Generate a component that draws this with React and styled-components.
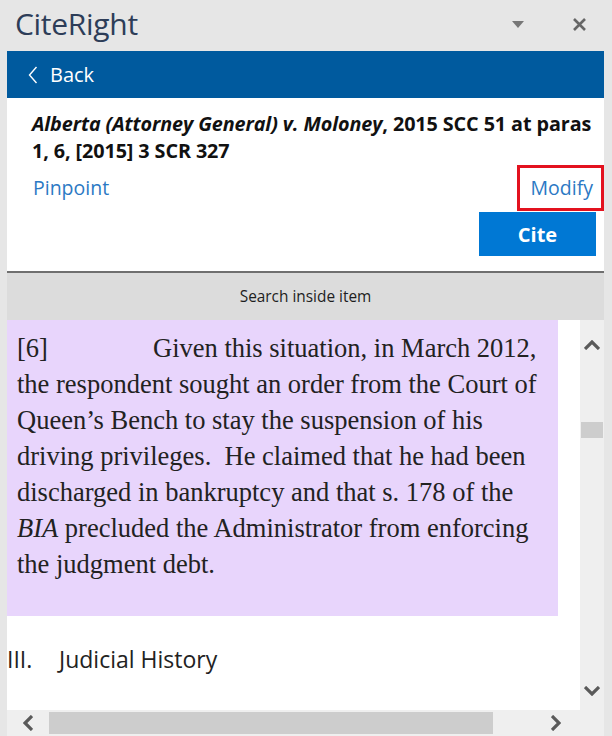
import React from "react";
import styled, { createGlobalStyle } from "styled-components";

const GlobalStyle = createGlobalStyle`
  html, body {
    margin: 0;
    padding: 0;
    background: #e6e6e6;
    overflow: hidden;
  }
  * {
    box-sizing: border-box;
  }
`;

function App() {
  return (
    <Frame>
      <GlobalStyle />
      <TitleBar>
        <AppName>CiteRight</AppName>
        <TitleActions>
          <svg width="12" height="7" viewBox="0 0 12 7">
            <path d="M0 0 L12 0 L6 7 Z" fill="#777" />
          </svg>
          <svg width="15" height="15" viewBox="0 0 15 15">
            <path d="M2 2 L13 13 M13 2 L2 13" stroke="#666" strokeWidth="2.6" />
          </svg>
        </TitleActions>
      </TitleBar>

      <BackBar>
        <svg width="10" height="18" viewBox="0 0 10 18">
          <path d="M8.5 1 L1.5 9 L8.5 17" stroke="#fff" strokeWidth="1.4" fill="none" />
        </svg>
        <BackLabel>Back</BackLabel>
      </BackBar>

      <Card>
        <Citation>
          <em>Alberta (Attorney General) v. Moloney</em>, 2015 SCC 51 at paras 1, 6,
          [2015] 3 SCR 327
        </Citation>
        <LinkRow>
          <TextLink>Pinpoint</TextLink>
          <TextLink $boxed>Modify</TextLink>
        </LinkRow>
        <ButtonRow>
          <CiteButton>Cite</CiteButton>
        </ButtonRow>
      </Card>

      <SearchBar>Search inside item</SearchBar>

      <Viewer>
        <Document>
          <Highlight>
            <ParaNum>[6]</ParaNum>Given this situation, in March 2012, the respondent
            sought an order from the Court of Queen’s Bench to stay the suspension of
            his driving privileges.&nbsp; He claimed that he had been discharged in
            bankruptcy and that s. 178 of the <i>BIA</i> precluded the Administrator
            from enforcing the judgment debt.
          </Highlight>
          <Heading>
            <HeadingNum>III.</HeadingNum>Judicial History
          </Heading>
        </Document>
        <VScroll>
          <svg viewBox="0 0 16 10" width="16" height="10">
            <path d="M1 9 L8 2 L15 9" stroke="#5a5a5a" strokeWidth="3.2" fill="none" />
          </svg>
          <VThumb />
          <VSpacer />
          <svg viewBox="0 0 16 10" width="16" height="10">
            <path d="M1 1 L8 8 L15 1" stroke="#5a5a5a" strokeWidth="3.2" fill="none" />
          </svg>
        </VScroll>
      </Viewer>

      <HScroll>
        <HArrow $w={42}>
          <svg viewBox="0 0 10 16" width="10" height="16">
            <path d="M9 1 L2 8 L9 15" stroke="#5a5a5a" strokeWidth="3.2" fill="none" />
          </svg>
        </HArrow>
        <HThumb />
        <HSpacer />
        <HArrow $w={48}>
          <svg viewBox="0 0 10 16" width="10" height="16">
            <path d="M1 1 L8 8 L1 15" stroke="#5a5a5a" strokeWidth="3.2" fill="none" />
          </svg>
        </HArrow>
        <Corner />
      </HScroll>
    </Frame>
  );
}

export default App;

const Frame = styled.div`
  width: 612px;
  height: 736px;
  padding: 0 8px 0 7px;
  display: flex;
  flex-direction: column;
  font-family: "Open Sans", "Noto Sans", sans-serif;
`;

const TitleBar = styled.div`
  height: 51px;
  display: flex;
  align-items: center;
  justify-content: space-between;
  padding: 0 17px 0 8px;
`;

const AppName = styled.div`
  font-size: 30px;
  color: #2d3d58;
  letter-spacing: -0.3px;
  margin-top: -4px;
`;

const TitleActions = styled.div`
  display: flex;
  align-items: center;
  gap: 48px;
  margin-top: -2px;
`;

const BackBar = styled.div`
  height: 47px;
  background: #005a9e;
  display: flex;
  align-items: center;
  gap: 12px;
  padding-left: 21px;
`;

const BackLabel = styled.span`
  color: #fff;
  font-size: 20px;
`;

const Card = styled.div`
  height: 173px;
  background: #fff;
  padding: 12px 0 0 25px;
  display: flex;
  flex-direction: column;
`;

const Citation = styled.div`
  font-size: 19.8px;
  font-weight: 700;
  line-height: 27px;
  color: #111;
  padding-right: 2px;
  letter-spacing: -0.1px;
`;

const LinkRow = styled.div`
  display: flex;
  justify-content: space-between;
  align-items: center;
  margin-top: 1px;
`;

const TextLink = styled.span`
  font-size: 19.5px;
  color: #2b79c4;
  padding: ${(p) => (p.$boxed ? "7px 8px 7px 11px" : "0 0 0 1px")};
  border: ${(p) => (p.$boxed ? "3px solid #e3121f" : "none")};
  line-height: 26px;
`;

const ButtonRow = styled.div`
  display: flex;
  justify-content: flex-end;
  padding-right: 8px;
  margin-top: 1px;
`;

const CiteButton = styled.button`
  width: 117px;
  height: 44px;
  border: none;
  background: #0078d4;
  color: #fff;
  font-family: "Open Sans", "Noto Sans", sans-serif;
  font-size: 20px;
  font-weight: 700;
`;

const SearchBar = styled.div`
  height: 49px;
  border-top: 2px solid #6f6f6f;
  background: #dcdcdc;
  display: flex;
  align-items: center;
  justify-content: center;
  font-size: 15.4px;
  color: #1e1e1e;
`;

const Viewer = styled.div`
  height: 390px;
  display: flex;
  background: #fff;
`;

const Document = styled.div`
  flex: 1;
  overflow: hidden;
`;

const Highlight = styled.p`
  margin: 0;
  width: 551px;
  background: #e8d5fc;
  padding: 10px 14px 34px 10px;
  font-family: "Liberation Serif", "Times New Roman", serif;
  font-size: 26.5px;
  line-height: 36px;
  color: #222;
`;

const ParaNum = styled.span`
  display: inline-block;
  width: 136px;
`;

const Heading = styled.div`
  margin-top: 27px;
  font-size: 23px;
  color: #222;
  display: flex;
`;

const HeadingNum = styled.span`
  width: 52px;
`;

const VScroll = styled.div`
  width: 24px;
  background: #efefef;
  display: flex;
  flex-direction: column;
  align-items: center;
  padding: 20px 0 14px;
`;

const VThumb = styled.div`
  width: 22px;
  height: 16px;
  margin-top: 72px;
  background: #cdcdcd;
`;

const VSpacer = styled.div`
  flex: 1;
`;

const HScroll = styled.div`
  height: 26px;
  background: #efefef;
  display: flex;
  align-items: center;
`;

const HArrow = styled.div`
  width: ${(p) => p.$w}px;
  display: flex;
  justify-content: center;
`;

const HThumb = styled.div`
  width: 444px;
  height: 22px;
  background: #cdcdcd;
`;

const HSpacer = styled.div`
  flex: 1;
`;

const Corner = styled.div`
  width: 24px;
`;
